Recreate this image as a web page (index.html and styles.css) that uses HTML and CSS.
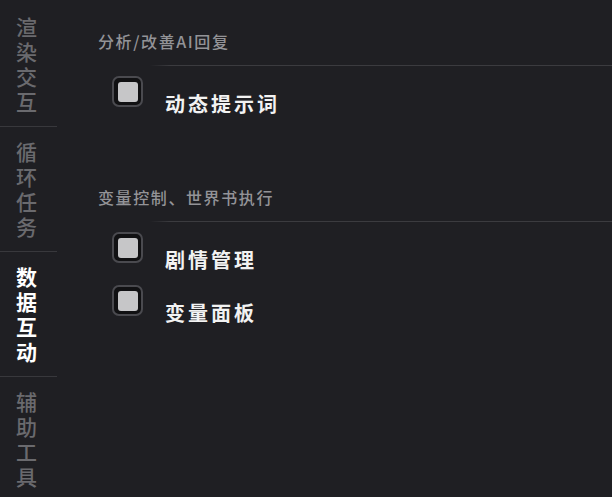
FILE: index.html
```html
<!DOCTYPE html>
<html lang="zh-CN">
<head>
<meta charset="utf-8">
<title>数据互动</title>
<link rel="stylesheet" href="styles.css">
</head>
<body>
<div class="app">
  <nav class="sidebar">
    <div class="tab"><span class="tab-text">渲染交互</span></div>
    <div class="tab"><span class="tab-text">循环任务</span></div>
    <div class="tab active"><span class="tab-text">数据互动</span></div>
    <div class="tab"><span class="tab-text">辅助工具</span></div>
  </nav>
  <main class="main">
    <section class="section first">
      <h2 class="section-title">分析/改善AI回复</h2>
      <div class="rule"></div>
      <div class="rows">
        <label class="row"><span class="box"><span class="box-inner"></span></span><span class="row-label">动态提示词</span></label>
      </div>
    </section>
    <section class="section second">
      <h2 class="section-title">变量控制、世界书执行</h2>
      <div class="rule"></div>
      <div class="rows">
        <label class="row"><span class="box"><span class="box-inner"></span></span><span class="row-label">剧情管理</span></label>
        <label class="row"><span class="box"><span class="box-inner"></span></span><span class="row-label">变量面板</span></label>
      </div>
    </section>
  </main>
</div>
</body>
</html>
```
FILE: styles.css
```css
html, body {
  margin: 0;
  padding: 0;
  background: #1f1f23;
  height: 497px;
  overflow: hidden;
}
body {
  font-family: "Noto Sans CJK SC", "Noto Sans", sans-serif;
}
.app {
  display: flex;
  height: 497px;
}
.sidebar {
  width: 57px;
  flex: none;
  display: flex;
  flex-direction: column;
  padding-top: 2px;
}
.tab {
  height: 124px;
  flex: none;
  display: flex;
  align-items: center;
  justify-content: center;
  border-bottom: 1px solid #38383c;
  padding-right: 4px;
}
.tab-text {
  display: block;
  width: 21px;
  font-size: 21px;
  line-height: 25px;
  text-align: center;
  word-break: break-all;
  font-weight: 500;
  color: #6a6a6e;
}
.tab.active .tab-text {
  color: #ffffff;
  font-weight: 700;
}
.main {
  flex: 1;
  padding-left: 41px;
  padding-top: 30px;
}
.section-title {
  margin: 0 0 13px 0;
  font-size: 16px;
  line-height: 22px;
  font-weight: 500;
  letter-spacing: 1.6px;
  color: #939397;
}
.rule {
  height: 1px;
  background: linear-gradient(to right, rgba(58,58,62,0) 0, rgba(58,58,62,0) 52px, #3b3b3f 72px, #3b3b3f 100%);
}
.rows {
  display: flex;
  flex-direction: column;
  gap: 13px;
  padding-top: 10px;
  padding-left: 14px;
}
.row {
  display: flex;
  align-items: flex-start;
  gap: 22px;
}
.box {
  width: 31px;
  height: 31px;
  box-sizing: border-box;
  border: 2px solid #4a4a4f;
  border-radius: 7px;
  background: #111113;
  display: flex;
  align-items: center;
  justify-content: center;
  flex: none;
}
.box-inner {
  width: 20px;
  height: 20px;
  border-radius: 3px;
  background: #c6c6c8;
}
.row-label {
  padding-top: 16px;
  font-size: 20px;
  line-height: 24px;
  font-weight: 700;
  letter-spacing: 3px;
  color: #f2f2f2;
}
.section.second {
  margin-top: 70px;
}
```
